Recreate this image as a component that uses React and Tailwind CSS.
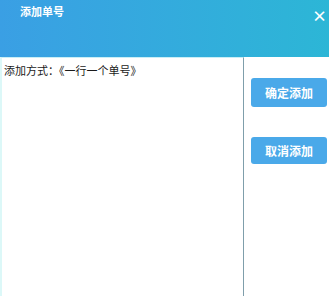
import React from 'react';

const App = () => {
  const font = { fontFamily: '"Noto Sans CJK SC", "Noto Sans", sans-serif' };

  return (
    <div className="w-[329px] h-[296px] bg-white overflow-hidden flex flex-col" style={font}>
      {/* Header */}
      <div className="h-[57px] shrink-0 bg-gradient-to-r from-[#3a9fe4] to-[#2cb6d6] flex items-start justify-between pl-[20px] pr-[2px] pt-[3px]">
        <span className="text-[11px] leading-[16px] font-bold text-white">添加单号</span>
        <span className="text-[15px] leading-[16px] font-bold text-white mt-[5px]">×</span>
      </div>

      {/* Body */}
      <div className="flex flex-1 min-h-0">
        <div className="w-[244px] shrink-0 border-l-[2px] border-l-[#dcf8f8] border-r border-r-[#7f9eab] border-t border-t-[#c9eef6] bg-white pl-[2px] pt-[4px]">
          <p className="text-[11px] leading-[16px] text-[#1a1a1a]">添加方式：《一行一个单号》</p>
        </div>

        <div className="flex-1 flex flex-col pl-[7px] pt-[21px] gap-[30px]">
          <button className="w-[76px] h-[29px] rounded-[3px] bg-[#4aa9e9] text-white text-[12px] font-bold">
            确定添加
          </button>
          <button className="w-[76px] h-[27px] rounded-[3px] bg-[#4aa9e9] text-white text-[12px] font-bold">
            取消添加
          </button>
        </div>
      </div>
    </div>
  );
};

export default App;
